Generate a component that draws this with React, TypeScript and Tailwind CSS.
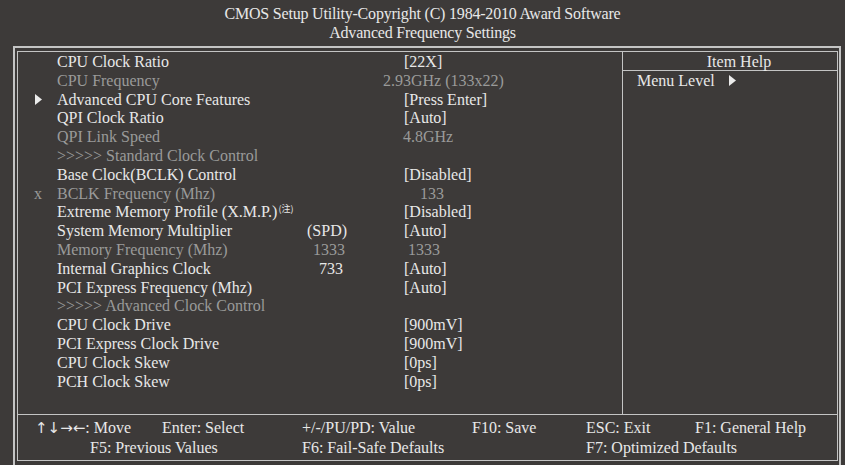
import React from 'react';

type Row = {
  label: string;
  mark?: 'arrow' | 'x';
  dim?: boolean;
  mid?: string;
  midPad?: string;
  value?: string;
  valuePad?: string;
  note?: boolean;
};

const rows: Row[] = [
  { label: 'CPU Clock Ratio', value: '[22X]', valuePad: 'pl-[24px]' },
  { label: 'CPU Frequency', dim: true, value: '2.93GHz (133x22)', valuePad: 'pl-[3px]' },
  { label: 'Advanced CPU Core Features', mark: 'arrow', value: '[Press Enter]', valuePad: 'pl-[24px]' },
  { label: 'QPI Clock Ratio', value: '[Auto]', valuePad: 'pl-[24px]' },
  { label: 'QPI Link Speed', dim: true, value: '4.8GHz', valuePad: 'pl-[23px]' },
  { label: '>>>>> Standard Clock Control', dim: true },
  { label: 'Base Clock(BCLK) Control', value: '[Disabled]', valuePad: 'pl-[24px]' },
  { label: 'BCLK Frequency (Mhz)', mark: 'x', dim: true, value: '133', valuePad: 'pl-[40px]' },
  { label: 'Extreme Memory Profile (X.M.P.)', note: true, value: '[Disabled]', valuePad: 'pl-[24px]' },
  { label: 'System Memory Multiplier', mid: '(SPD)', midPad: 'pl-[17px]', value: '[Auto]', valuePad: 'pl-[24px]' },
  { label: 'Memory Frequency (Mhz)', dim: true, mid: '1333', midPad: 'pl-[23px]', value: '1333', valuePad: 'pl-[28px]' },
  { label: 'Internal Graphics Clock', mid: '733', midPad: 'pl-[29px]', value: '[Auto]', valuePad: 'pl-[24px]' },
  { label: 'PCI Express Frequency (Mhz)', value: '[Auto]', valuePad: 'pl-[24px]' },
  { label: '>>>>> Advanced Clock Control', dim: true },
  { label: 'CPU Clock Drive', value: '[900mV]', valuePad: 'pl-[24px]' },
  { label: 'PCI Express Clock Drive', value: '[900mV]', valuePad: 'pl-[24px]' },
  { label: 'CPU Clock Skew', value: '[0ps]', valuePad: 'pl-[24px]' },
  { label: 'PCH Clock Skew', value: '[0ps]', valuePad: 'pl-[24px]' },
];

function Arrow() {
  return (
    <svg width="7" height="11" viewBox="0 0 7 11" className="inline-block">
      <polygon points="0,0 7,5.5 0,11" fill="#ececec" />
    </svg>
  );
}

export default function App() {
  return (
    <div
      className="w-[845px] h-[465px] overflow-hidden bg-[#3d3a39] text-[#e8e8e8] text-[16px]"
      style={{ fontFamily: '"Liberation Serif", "Times New Roman", serif' }}
    >
      {/* Title */}
      <div className="pt-[4px] h-[46px] text-center leading-[19px] tracking-[-0.2px]">
        <div>CMOS Setup Utility-Copyright (C) 1984-2010 Award Software</div>
        <div>Advanced Frequency Settings</div>
      </div>

      {/* Outer frame */}
      <div className="ml-[13px] w-[828px] h-[430px] border-2 border-[#c4c4c4] pt-[3px] pl-[2px] pr-[1px]">
        <div className="h-[410px] border border-[#c4c4c4] flex flex-col">
          <div className="flex h-[362px]">
            {/* Settings list */}
            <div className="w-[604px] pt-[1px] leading-[18.8px]">
              {rows.map((r, i) => (
                <div key={i} className={`grid grid-cols-[39px_233px_90px_1fr] ${r.dim ? 'text-[#9a9a9a]' : ''}`}>
                  <div className="pl-[17px] flex items-center">
                    {r.mark === 'arrow' && <Arrow />}
                    {r.mark === 'x' && <span className="text-[#9a9a9a] -ml-[1px]">x</span>}
                  </div>
                  <div className="whitespace-nowrap">
                    {r.label}
                    {r.note && (
                      <sup
                        className="text-[9px] ml-[1px] -top-[5px]"
                        style={{ fontFamily: '"Noto Sans CJK JP", "Noto Sans CJK SC", sans-serif' }}
                      >
                        (注)
                      </sup>
                    )}
                  </div>
                  <div className={`whitespace-nowrap ${r.midPad ?? ''}`}>{r.mid}</div>
                  <div className={`whitespace-nowrap ${r.valuePad ?? ''}`}>{r.value}</div>
                </div>
              ))}
            </div>

            {/* Item help */}
            <div className="flex-1 border-l border-[#c4c4c4] flex flex-col">
              <div className="h-[19px] border-b border-[#c4c4c4] text-center leading-[19px] pl-[18px]">Item Help</div>
              <div className="pl-[14px] leading-[19px] flex items-center gap-[14px]">
                <span>Menu Level</span>
                <Arrow />
              </div>
            </div>
          </div>

          {/* Footer */}
          <div className="flex-1 border-t border-[#c4c4c4] pt-[3px] pl-[17px] leading-[20px] whitespace-nowrap">
            <div className="grid grid-cols-[127px_140px_170px_114px_109px_1fr]">
              <div>
                <span className="text-[15px]" style={{ fontFamily: '"DejaVu Sans", sans-serif' }}>↑↓→←</span>: Move
              </div>
              <div>Enter: Select</div>
              <div>+/-/PU/PD: Value</div>
              <div>F10: Save</div>
              <div>ESC: Exit</div>
              <div>F1: General Help</div>
            </div>
            <div className="grid grid-cols-[127px_140px_170px_114px_109px_1fr]">
              <div className="col-span-2 pl-[55px]">F5: Previous Values</div>
              <div className="col-span-2">F6: Fail-Safe Defaults</div>
              <div className="col-span-2">F7: Optimized Defaults</div>
            </div>
          </div>
        </div>
      </div>
    </div>
  );
}
